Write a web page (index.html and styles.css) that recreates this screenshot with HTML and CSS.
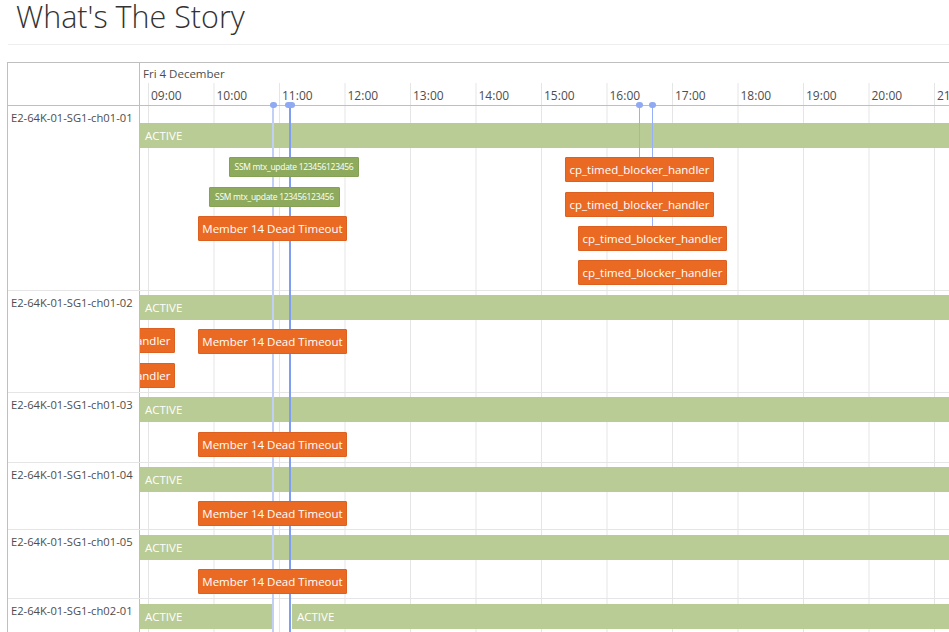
FILE: index.html
```html
<!DOCTYPE html>
<html lang="en">
<head>
    <meta charset="UTF-8">
    <meta name="viewport" content="width=device-width, initial-scale=1.0">
    <title>What's The Story</title>
    <link rel="stylesheet" href="styles.css">
</head>
<body>
    <div class="page">
        <h1>What's The Story</h1>
        <hr class="divider">

        <div class="timeline">
            <div class="tl-head">
                <div class="tl-corner"></div>
                <div class="tl-axis">
                    <div class="tl-date">Fri 4 December</div>
                    <div class="tl-hours">
                        <span>09:00</span><span>10:00</span><span>11:00</span><span>12:00</span>
                        <span>13:00</span><span>14:00</span><span>15:00</span><span>16:00</span>
                        <span>17:00</span><span>18:00</span><span>19:00</span><span>20:00</span>
                        <span>21:00</span>
                    </div>
                </div>
            </div>

            <div class="tl-body">
                <!-- lines from box items up to the axis -->
                <div class="tl-marks">
                    <div class="mark mark-light" style="left: 133px; height: 560px"></div>
                    <div class="mark mark-strong" style="left: 149px; height: 560px"></div>
                    <div class="mark" style="left: 499px; height: 52px"></div>
                    <div class="mark" style="left: 512px; height: 121px"></div>
                    <div class="dot" style="left: 133px"></div>
                    <div class="dot" style="left: 148px"></div>
                    <div class="dot" style="left: 151px"></div>
                    <div class="dot" style="left: 499px"></div>
                    <div class="dot" style="left: 512px"></div>
                </div>

                <div class="tl-row row-1">
                    <div class="tl-label">E2-64K-01-SG1-ch01-01</div>
                    <div class="tl-lane">
                        <div class="range" style="left: 0; top: 17px; width: 900px">ACTIVE</div>
                        <div class="box box-ssm" style="left: 89px; top: 51px; width: 130px">SSM mtx_update 123456123456</div>
                        <div class="box box-ssm" style="left: 69px; top: 81px; width: 131px">SSM mtx_update 123456123456</div>
                        <div class="box box-alert" style="left: 58px; top: 110px">Member 14 Dead Timeout</div>
                        <div class="box box-alert" style="left: 425px; top: 51px">cp_timed_blocker_handler</div>
                        <div class="box box-alert" style="left: 425px; top: 86px">cp_timed_blocker_handler</div>
                        <div class="box box-alert" style="left: 438px; top: 120px">cp_timed_blocker_handler</div>
                        <div class="box box-alert" style="left: 438px; top: 154px">cp_timed_blocker_handler</div>
                    </div>
                </div>

                <div class="tl-row row-2">
                    <div class="tl-label">E2-64K-01-SG1-ch01-02</div>
                    <div class="tl-lane">
                        <div class="range" style="left: 0; top: 4px; width: 900px">ACTIVE</div>
                        <div class="box box-alert" style="left: -114px; top: 37px">cp_timed_blocker_handler</div>
                        <div class="box box-alert" style="left: -114px; top: 72px">cp_timed_blocker_handler</div>
                        <div class="box box-alert" style="left: 58px; top: 38px">Member 14 Dead Timeout</div>
                    </div>
                </div>

                <div class="tl-row row-3">
                    <div class="tl-label">E2-64K-01-SG1-ch01-03</div>
                    <div class="tl-lane">
                        <div class="range" style="left: 0; top: 4px; width: 900px">ACTIVE</div>
                        <div class="box box-alert" style="left: 58px; top: 39px">Member 14 Dead Timeout</div>
                    </div>
                </div>

                <div class="tl-row row-4">
                    <div class="tl-label">E2-64K-01-SG1-ch01-04</div>
                    <div class="tl-lane">
                        <div class="range" style="left: 0; top: 4px; width: 900px">ACTIVE</div>
                        <div class="box box-alert" style="left: 58px; top: 38px">Member 14 Dead Timeout</div>
                    </div>
                </div>

                <div class="tl-row row-5">
                    <div class="tl-label">E2-64K-01-SG1-ch01-05</div>
                    <div class="tl-lane">
                        <div class="range" style="left: 0; top: 5px; width: 900px">ACTIVE</div>
                        <div class="box box-alert" style="left: 58px; top: 39px">Member 14 Dead Timeout</div>
                    </div>
                </div>

                <div class="tl-row row-6">
                    <div class="tl-label">E2-64K-01-SG1-ch02-01</div>
                    <div class="tl-lane">
                        <div class="range" style="left: 0; top: 5px; width: 132px">ACTIVE</div>
                        <div class="range" style="left: 152px; top: 5px; width: 760px">ACTIVE</div>
                    </div>
                </div>
            </div>
        </div>
    </div>
</body>
</html>
```

FILE: styles.css
```css
html, body {
    margin: 0;
    overflow: hidden;
}
body {
    font-family: "Open Sans", "Liberation Sans", sans-serif;
    background-color: white;
    color: #4d4d4d;
}
.page {
    padding-left: 7px;
}
h1 {
    margin: 0 0 0 9px;
    font-size: 30.5px;
    line-height: 32px;
    font-weight: 300;
    color: #333;
}
.divider {
    margin: 12px 0 17px 1px;
    border: none;
    border-top: 1px solid #eee;
}

/* timeline frame */
.timeline {
    width: 1000px;
    border: 1px solid #bfbfbf;
    border-right: none;
    font-size: 11.5px;
}
.tl-head {
    display: flex;
    height: 42px;
    border-bottom: 1px solid #bfbfbf;
}
.tl-corner {
    width: 131px;
    flex-shrink: 0;
    border-right: 1px solid #bfbfbf;
}
.tl-axis {
    flex: 1;
    display: flex;
    flex-direction: column;
}
.tl-date {
    height: 18px;
    padding: 2px 0 0 3px;
    line-height: 18px;
    font-size: 11.5px;
}
.tl-hours {
    flex: 1;
    display: flex;
    padding-left: 8px;
    background-image: linear-gradient(to right, #e5e5e5 1px, transparent 1px);
    background-size: 65.5px 100%;
    background-position: 8px 0;
}
.tl-hours span {
    flex: 0 0 65.5px;
    box-sizing: border-box;
    padding: 4px 0 0 3px;
    line-height: 17px;
    font-size: 12px;
}

/* rows */
.tl-body {
    position: relative;
}
.tl-row {
    display: flex;
    border-bottom: 1px solid #e5e5e5;
}
.row-1 { height: 184px; }
.row-2 { height: 101px; }
.row-3 { height: 69px; }
.row-4 { height: 66px; }
.row-5 { height: 68px; }
.row-6 { height: 60px; }
.tl-label {
    width: 128px;
    flex-shrink: 0;
    padding: 3px 0 0 3px;
    line-height: 17px;
    font-size: 11.2px;
    border-right: 1px solid #bfbfbf;
    white-space: nowrap;
}
.tl-lane {
    flex: 1;
    position: relative;
    overflow: hidden;
    background-image: linear-gradient(to right, #e5e5e5 1px, transparent 1px);
    background-size: 65.5px 100%;
    background-position: 8px 0;
}

/* items */
.range {
    position: absolute;
    height: 25px;
    box-sizing: border-box;
    padding-left: 5px;
    line-height: 25px;
    background-color: #b9cc96;
    color: white;
}
.box {
    position: absolute;
    z-index: 2;
    width: 149px;
    height: 25px;
    box-sizing: border-box;
    line-height: 23px;
    text-align: center;
    white-space: nowrap;
    color: white;
    border-radius: 1px;
}
.box-alert {
    font-size: 11.5px;
    background-color: #ea6a24;
    border: 1px solid #dc6020;
}
.box-ssm {
    height: 20px;
    line-height: 18px;
    font-size: 8.5px;
    letter-spacing: -0.3px;
    background-color: #8eab5d;
    border: 1px solid #84a155;
}

/* lines and dots over the lanes */
.tl-marks {
    position: absolute;
    top: 0;
    left: 132px;
    right: 0;
    z-index: 1;
}
.mark {
    position: absolute;
    top: 0;
    width: 1px;
    background-color: #97b0f8;
}
.mark-light {
    background-color: #c3d0f6;
    width: 2px;
    margin-left: -1px;
}
.mark-strong {
    width: 2px;
    background-color: #7f9eef;
}
.dot {
    position: absolute;
    top: -4px;
    width: 7px;
    height: 6px;
    margin-left: -3px;
    border-radius: 3px;
    background-color: #8fa9f2;
}
```
